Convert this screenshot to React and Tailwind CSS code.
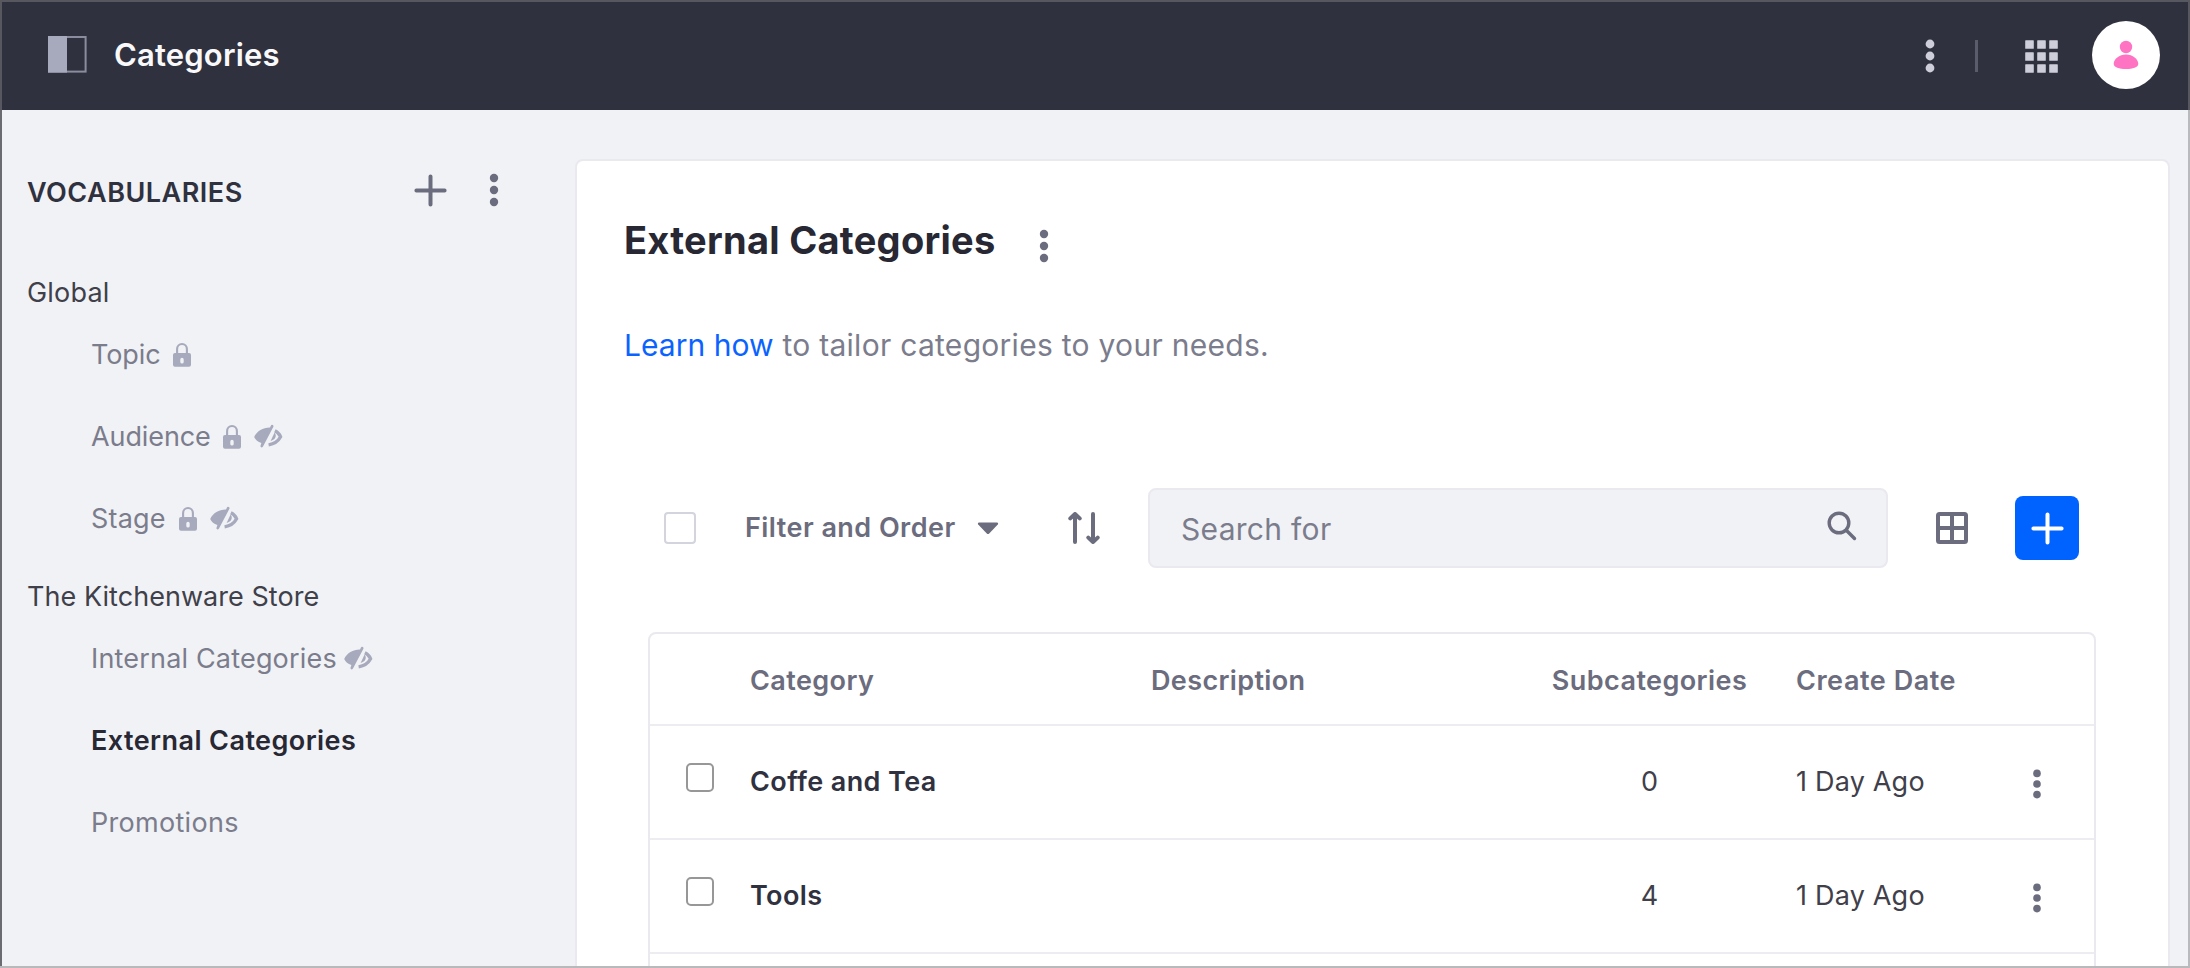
function Kebab({ className = '', r = 4.2, gap = 12 }) {
  return (
    <svg className={className} width="10" height="34" viewBox="0 0 10 34" fill="currentColor">
      <circle cx="5" cy={17 - gap} r={r} />
      <circle cx="5" cy="17" r={r} />
      <circle cx="5" cy={17 + gap} r={r} />
    </svg>
  );
}

function Plus({ className = '' }) {
  return (
    <svg className={className} width="33" height="33" viewBox="0 0 33 33" fill="none" stroke="currentColor" strokeWidth="4" strokeLinecap="round">
      <path d="M16.5 2.4v28.2M2.4 16.5h28.2" />
    </svg>
  );
}

function Lock() {
  return (
    <svg className="shrink-0" width="18" height="25" viewBox="0 0 18 25">
      <path d="M4.1 12V7.2a4.9 5.2 0 0 1 9.8 0V12" fill="none" stroke="#a7a9bc" strokeWidth="2.1" />
      <path
        fill="#a7a9bc"
        fillRule="evenodd"
        d="M2 11h14a2 2 0 0 1 2 2v9.7a2 2 0 0 1-2 2H2a2 2 0 0 1-2-2V13a2 2 0 0 1 2-2Zm7 4.8a1.7 1.7 0 0 0-1.7 1.7v2.4a1.7 1.7 0 0 0 3.4 0v-2.4A1.7 1.7 0 0 0 9 15.8Z"
      />
    </svg>
  );
}

function Hidden() {
  return (
    <svg className="shrink-0" width="29" height="25" viewBox="0 0 29 25">
      <path fill="#a7a9bc" d="M.2 12.9C3.2 7 9 3.5 16 3.6l1-2a1.3 1.3 0 0 1 2.4 1.1L9 22.6a1.3 1.3 0 0 1-2.4-1.2L7.4 19C4 17.9 1.5 15.8.2 12.9Z" />
      <path fill="none" stroke="#a7a9bc" strokeWidth="3.3" d="M20.9 6.7c2.700 1.300 4.700 3.400 5.700 6.100-2.300 4.300-6.200 7.200-12 8" />
      <path fill="#a7a9bc" d="M20.6 8.600c2.500 3.100.8 7.500-4 8.300Z" />
    </svg>
  );
}

const groups = [
  {
    name: 'Global',
    tracking: 'tracking-[0.2px]',
    items: [
      { name: 'Topic', lock: true, width: 'w-[83px]', tracking: 'tracking-[-0.1px]' },
      { name: 'Audience', lock: true, hidden: true, width: 'w-[133px]', tracking: 'tracking-[-0.1px]' },
      { name: 'Stage', lock: true, hidden: true, width: 'w-[89px]', tracking: 'tracking-[0.2px]' },
    ],
  },
  {
    name: 'The Kitchenware Store',
    tracking: 'tracking-[0.04px]',
    items: [
      { name: 'Internal Categories', hidden: true, width: 'w-[254px]', tracking: 'tracking-[0.18px]' },
      { name: 'External Categories', active: true, tracking: 'tracking-[0.43px]' },
      { name: 'Promotions', tracking: 'tracking-[0.3px]' },
    ],
  },
];

const rows = [
  { name: 'Coffe and Tea', count: 0, date: '1 Day Ago' },
  { name: 'Tools', count: 4, date: '1 Day Ago' },
];

function Header() {
  return (
    <header className="flex h-[110px] shrink-0 items-start border-x-2 border-t-2 border-[#57585f] bg-[#30313f] pl-[46px] pr-7">
      <svg className="mt-[34px]" width="39" height="37" viewBox="0 0 39 37">
        <rect x="1" y="1" width="36.6" height="34.6" fill="none" stroke="#8b8d9f" strokeWidth="2" />
        <rect x="0" y="0" width="19" height="36.6" fill="#a7a9bc" />
      </svg>
      <h1 className="ml-[27px] mt-[33px] text-[31px] font-semibold leading-10 tracking-[0.17px] text-[#f9f9fb]">Categories</h1>
      <div className="ml-auto flex h-[105px] items-center text-[#cdced9]">
        <Kebab r={4.4} className="mt-[3px]" />
        <div className="ml-10 mt-[3px] h-8 w-[3px] bg-[#5a5b6b]" />
        <svg className="ml-[47px] mt-[3px]" width="33" height="33" viewBox="0 0 33 33" fill="currentColor">
          {[0, 12, 24].map((y) => [0, 12, 24].map((x) => <rect key={`${x}-${y}`} x={x + 0.2} y={y + 0.2} width="8.6" height="8.6" rx="0.6" />))}
        </svg>
        <div className="ml-[34px] flex size-[68px] items-center justify-center rounded-full bg-white">
          <svg width="26" height="30" viewBox="0 0 26 30" fill="#ff73c3">
            <circle cx="13" cy="7" r="6.2" />
            <path d="M13 14.500c6.800 0 12.300 4.700 12.300 9.300 0 3.700-5.600 5.200-12.300 5.200S.7 27.500.7 23.800c0-4.600 5.500-9.300 12.300-9.300Z" />
          </svg>
        </div>
      </div>
    </header>
  );
}

function Sidebar() {
  return (
    <aside className="w-[575px] shrink-0 border-l-2 border-[#6b6c72] pl-[25px] text-[27px]">
      <div className="mt-[62px] flex h-10 items-center">
        <h2 className="w-[387px] pt-0.5 font-semibold leading-10 tracking-[0.49px] text-[#30313f]">VOCABULARIES</h2>
        <Plus className="mb-1 text-[#6b6c7e]" />
        <Kebab className="mb-1 ml-[42px] text-[#6b6c7e]" />
      </div>
      <nav className="mt-[60px] flex flex-col gap-[17px]">
        {groups.map((group) => (
          <section key={group.name}>
            <h3 className={`h-[41px] leading-[41px] text-[#3f404a] ${group.tracking}`}>{group.name}</h3>
            <ul className="pl-[63px]">
              {group.items.map((item) => (
                <li key={item.name} className="flex h-[82px] items-center">
                  <span
                    className={`shrink-0 whitespace-nowrap pl-px pt-0.5 ${item.width ?? ''} ${item.tracking} ${item.active ? 'font-semibold text-[#272833]' : 'text-[#7b7c8c]'}`}
                  >
                    {item.name}
                  </span>
                  {item.lock && <Lock />}
                  {item.hidden && (
                    <span className={item.lock ? 'ml-[13px]' : ''}>
                      <Hidden />
                    </span>
                  )}
                </li>
              ))}
            </ul>
          </section>
        ))}
      </nav>
    </aside>
  );
}

function Toolbar() {
  return (
    <div className="mt-[123px] flex h-20 items-center pl-[87px] text-[#6b6c7e]">
      <div className="size-8 shrink-0 rounded-[4px] border-2 border-[#d3d4de] bg-white" />
      <span className="ml-[49px] w-[212px] shrink-0 whitespace-nowrap pt-px text-[27px] font-semibold tracking-[0.46px]">Filter and Order</span>
      <svg className="ml-5 shrink-0" width="22" height="13" viewBox="0 0 22 13" fill="currentColor">
        <path d="M2 .5h18c1.100 0 1.500 1.100.8 1.900l-8.600 9.100c-.7.700-1.700.7-2.400 0L1.200 2.400C.5 1.600.9.500 2 .500Z" />
      </svg>
      <svg className="ml-[69px] shrink-0" width="32" height="32" viewBox="0 0 32 32" fill="none" stroke="currentColor" strokeWidth="4" strokeLinecap="round" strokeLinejoin="round">
        <path d="M7 30V3M2.3 6.400 7 2l4.700 4.400M25 2v27M20.300 25.600 25 30l4.700-4.400" />
      </svg>
      <div className="ml-12 flex h-20 w-[740px] shrink-0 items-center justify-between rounded-lg border-2 border-[#e9e9ef] bg-[#f1f2f5] pl-[31px] pr-7">
        <span className="pt-0.5 text-[30px] tracking-[0.3px] text-[#7b7c8c]">Search for</span>
        <svg className="mb-1" width="32" height="32" viewBox="0 0 32 32" fill="none" stroke="currentColor" strokeWidth="3.4" strokeLinecap="round">
          <circle cx="13" cy="13" r="9.8" />
          <path d="m20.300 20.300 8.200 8.200" />
        </svg>
      </div>
      <svg className="ml-12 shrink-0" width="32" height="32" viewBox="0 0 32 32" fill="none" stroke="currentColor" strokeWidth="4">
        <rect x="2" y="2" width="28" height="28" rx="1.5" />
        <path d="M16 2v28M2 16h28" />
      </svg>
      <div className="ml-[47px] flex size-16 shrink-0 items-center justify-center rounded-lg bg-[#0062ff] text-white">
        <Plus />
      </div>
    </div>
  );
}

function Table() {
  return (
    <div className="ml-[71px] mt-16 h-[400px] w-[1448px] rounded-lg border-2 border-[#e9e9ef] text-[27px]">
      <div className="grid h-[92px] grid-cols-[100px_401px_399px_199px_241px_1fr] items-center whitespace-nowrap border-b-2 border-[#ececf1] pt-1 font-semibold text-[#6b6c7e]">
        <span />
        <span className="tracking-[0.42px]">Category</span>
        <span className="tracking-[0.36px]">Description</span>
        <span className="text-center tracking-[0.42px]">Subcategories</span>
        <span className="pl-[47px] tracking-[0.55px]">Create Date</span>
        <span />
      </div>
      {rows.map((row) => (
        <div
          key={row.name}
          className="grid h-[114px] grid-cols-[100px_401px_399px_199px_241px_1fr] items-center whitespace-nowrap border-b-2 border-[#ececf1] text-[#3f404a]"
        >
          <div className="mb-[9px] ml-9 h-[29px] w-7 rounded-[5px] border-2 border-[#979797] bg-white" />
          <span className="pt-px font-semibold tracking-[0.4px] text-[#30313f]">{row.name}</span>
          <span />
          <span className="pt-px text-center">{row.count}</span>
          <span className="pl-[47px] pt-px tracking-[0.2px]">{row.date}</span>
          <Kebab r={3.8} gap={10.6} className="ml-[42px] mt-[3px] text-[#6b6c7e]" />
        </div>
      ))}
    </div>
  );
}

export default function App() {
  return (
    <div className="flex h-[968px] w-[2190px] flex-col overflow-hidden border-b-2 border-[#b9b9bc] bg-[#f1f2f5] font-['Inter',sans-serif] antialiased">
      <Header />
      <div className="flex min-h-0 flex-1 overflow-hidden border-r-2 border-[#b9babd]">
        <Sidebar />
        <main className="mt-[49px] h-[900px] w-[1595px] rounded-lg border-2 border-[#e9e9ef] bg-white">
          <div className="mt-[54px] flex h-[50px] items-center pl-[47px]">
            <h2 className="w-[415px] whitespace-nowrap text-[38px] font-bold tracking-[0.28px] text-[#272833]">External Categories</h2>
            <Kebab className="mt-3 text-[#6b6c7e]" />
          </div>
          <p className="mt-[60px] pl-[47px] text-[30px] leading-10 tracking-[0.28px] text-[#7b7c8c]">
            <a className="tracking-[0.05px] text-[#0b63ff]">Learn how</a> to tailor categories to your needs.
          </p>
          <Toolbar />
          <Table />
        </main>
      </div>
    </div>
  );
}
